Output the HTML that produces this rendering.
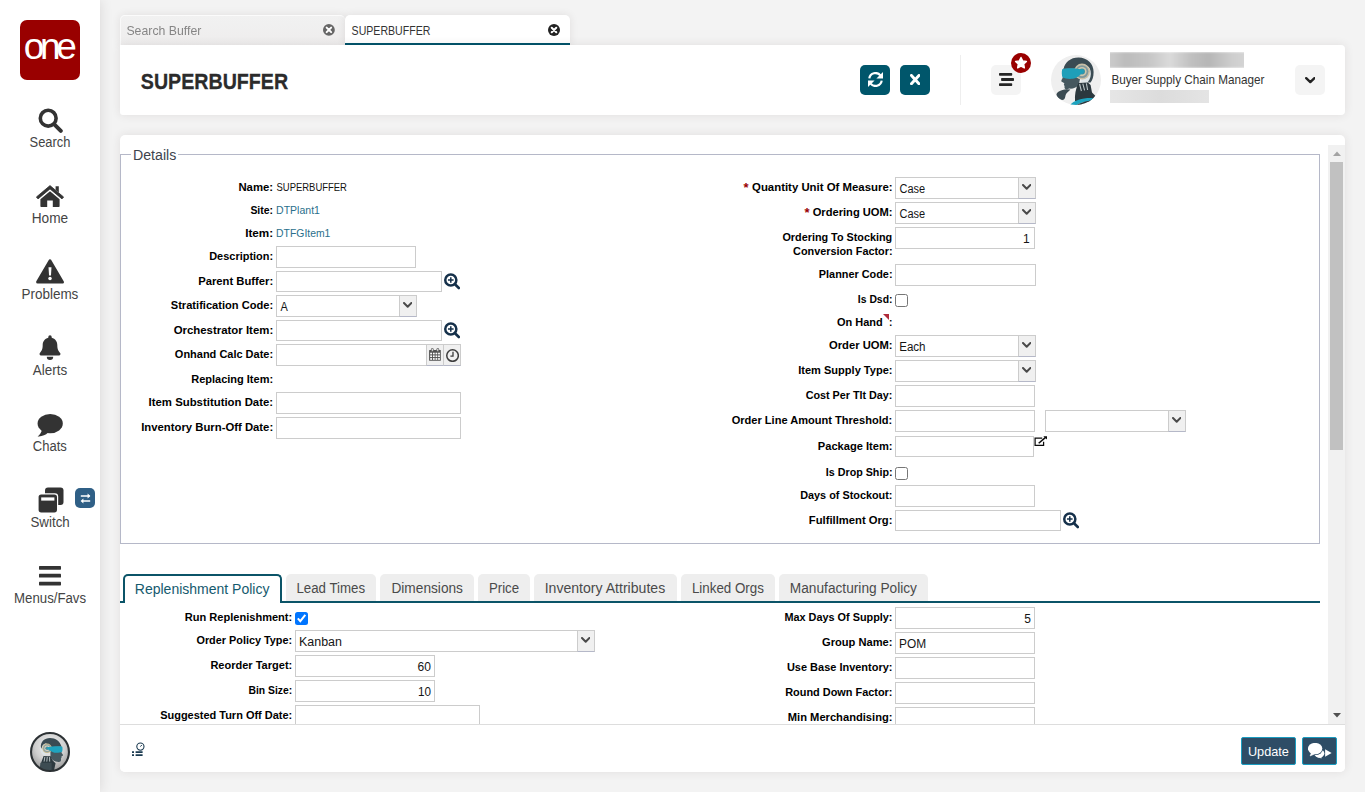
<!DOCTYPE html><html lang="en"><head><meta charset="utf-8"><title>SUPERBUFFER</title><style>
*{box-sizing:border-box;margin:0;padding:0}
html,body{width:1365px;height:792px;overflow:hidden}
body{background:#f3f3f3;font-family:'Liberation Sans',sans-serif;font-size:12px;color:#222;position:relative}
div,span,svg,i,b,nav,header,main,section,label,a,button,footer,aside,h1,fieldset,legend,ul,li{position:absolute}
.card{background:#fff;border-radius:5px;box-shadow:0 0 10px rgba(60,40,40,.10)}
.in{background:#fff;border:1px solid #ccc}
.tr{background:#f0f0f0;border:1px solid #ccc;border-bottom-color:#b5b8c8}
.cb{background:#fff;border:1px solid #767676;border-radius:2.5px}
.tab{background:#eee;border-radius:5px 5px 0 0}
.sq{border-radius:5px}
</style></head><body>
<aside style="left:0;top:0;width:100px;height:792px;background:#fff;box-shadow:0 0 12px rgba(60,40,40,.14)">
<div style="left:20px;top:20px;width:60px;height:60px;background:#990000;border-radius:7px"></div>
<span style="left:23px;top:26px;font-size:37px;line-height:41px;height:41px;white-space:pre;color:#fff;transform:matrix(1.0000,0,0,1,0.65,0.30);transform-origin:0 0;letter-spacing:-4.3px;">one</span>
<svg style="position:absolute;left:38px;top:107.5px;" width="25" height="25" viewBox="0 0 25 25"><circle cx="10.2" cy="10.2" r="7.9" fill="none" stroke="#333" stroke-width="3.6"/><path d="M16.3 16.3 L22.8 22.8" stroke="#333" stroke-width="4" stroke-linecap="round"/></svg>
<span style="left:29px;top:135px;font-size:13.8px;line-height:15px;height:15px;white-space:pre;color:#444;transform:matrix(0.9349,0,0,1,0.57,0.30);transform-origin:0 0;">Search</span>
<svg style="position:absolute;left:36px;top:184.7px;" width="28" height="22" viewBox="0 0 28 22"><path d="M14 0.6 L27.6 12 L26 13.9 L14 3.9 L2 13.9 L0.4 12 Z" fill="#333" stroke="#333" stroke-width="0.8" stroke-linejoin="round"/><path d="M19.6 1.2 h3.2 v6.4 l-3.2 -2.7 Z" fill="#333"/><path d="M14 6.2 L23.6 14.2 V21.2 Q23.6 22 22.8 22 H16.8 V15.6 H11.2 V22 H5.2 Q4.4 22 4.4 21.2 V14.2 Z" fill="#333"/></svg>
<span style="left:31px;top:211px;font-size:13.8px;line-height:15px;height:15px;white-space:pre;color:#444;transform:matrix(0.9907,0,0,1,0.74,0.30);transform-origin:0 0;">Home</span>
<svg style="position:absolute;left:36px;top:258.5px;" width="28" height="25" viewBox="0 0 28 25"><path d="M14 2 L26.3 23 H1.7 Z" fill="#333" stroke="#333" stroke-width="3.2" stroke-linejoin="round"/><path d="M12.5 8.2 h3 l-0.5 8.3 h-2 Z" fill="#fff"/><circle cx="14" cy="19.6" r="1.75" fill="#fff"/></svg>
<span style="left:21px;top:287px;font-size:13.8px;line-height:15px;height:15px;white-space:pre;color:#444;transform:matrix(0.9766,0,0,1,0.45,0.30);transform-origin:0 0;">Problems</span>
<svg style="position:absolute;left:39px;top:335px;" width="22" height="25" viewBox="0 0 22 25"><path d="M11 0.3 a1.7 1.7 0 0 1 1.7 1.7 v0.7 c3.6 0.8 5.6 3.8 5.6 7.4 c0 4.6 1.2 6.2 2.8 7.9 c0.9 1 0.2 2.4 -1.1 2.4 H2 c-1.3 0 -2 -1.4 -1.1 -2.4 c1.6 -1.7 2.8 -3.3 2.8 -7.9 c0 -3.6 2 -6.6 5.6 -7.4 v-0.7 A1.7 1.7 0 0 1 11 0.3 Z" fill="#333"/><path d="M7.8 21.8 h6.4 a3.2 3.2 0 0 1 -6.4 0 Z" fill="#333"/></svg>
<span style="left:32px;top:363px;font-size:13.8px;line-height:15px;height:15px;white-space:pre;color:#444;transform:matrix(0.9733,0,0,1,0.83,0.30);transform-origin:0 0;">Alerts</span>
<svg style="position:absolute;left:37px;top:413.5px;" width="26" height="23" viewBox="0 0 26 23"><ellipse cx="13.2" cy="9.6" rx="12.6" ry="9.6" fill="#333"/><path d="M5 15 C4.6 18.5 2.6 21 0.6 22.4 C4.5 22.8 8.6 21.4 11 18.6 Z" fill="#333"/></svg>
<span style="left:32px;top:439px;font-size:13.8px;line-height:15px;height:15px;white-space:pre;color:#444;transform:matrix(0.9434,0,0,1,0.84,0.30);transform-origin:0 0;">Chats</span>
<svg style="position:absolute;left:38px;top:487.3px;" width="26" height="26" viewBox="0 0 26 26"><rect x="7" y="0.5" width="18.5" height="17.5" rx="3" fill="#333"/><rect x="-0.6" y="6.2" width="20.8" height="20" rx="3.4" fill="#fff"/><rect x="0.6" y="7.4" width="18.4" height="18" rx="2.6" fill="#333"/><rect x="3.2" y="10.4" width="13.2" height="3.2" fill="#fff"/></svg>
<span style="left:30px;top:515px;font-size:13.8px;line-height:15px;height:15px;white-space:pre;color:#444;transform:matrix(0.9661,0,0,1,0.45,0.30);transform-origin:0 0;">Switch</span>
<svg style="position:absolute;left:39px;top:566.3px;" width="22" height="19.4" viewBox="0 0 22 19.4"><rect x="0" y="0" width="22" height="3.7" rx="0.6" fill="#333"/><rect x="0" y="7.85" width="22" height="3.7" rx="0.6" fill="#333"/><rect x="0" y="15.7" width="22" height="3.7" rx="0.6" fill="#333"/></svg>
<span style="left:14px;top:591px;font-size:13.8px;line-height:15px;height:15px;white-space:pre;color:#444;transform:matrix(0.9578,0,0,1,0.07,0.30);transform-origin:0 0;">Menus/Favs</span>
<div class="sq" style="left:75px;top:488px;width:20px;height:20px;background:#2f5f86"></div>
<svg style="position:absolute;left:79.5px;top:492.5px;" width="11" height="11" viewBox="0 0 11 11"><path d="M0.8 3 H9.6 M2 8 H10.2" stroke="#fff" stroke-width="1.3"/><path d="M7.6 0.6 L10.4 3 L7.6 5.4 Z M3.4 5.6 L0.6 8 L3.4 10.4 Z" fill="#fff"/></svg>
<svg style="position:absolute;left:30px;top:732px;" width="40" height="40" viewBox="0 0 50 50"><defs><clipPath id="cps"><circle cx="25" cy="25" r="23.6"/></clipPath><radialGradient id="rgs" cx="0.5" cy="0.35" r="0.7"><stop offset="0" stop-color="#f4f4f4"/><stop offset="0.55" stop-color="#cfcfcf"/><stop offset="1" stop-color="#8e8e8e"/></radialGradient></defs><circle cx="25" cy="25" r="24" fill="url(#rgs)"/><g clip-path="url(#cps)"><path d="M17 14 C13 16 12 21 13.6 25 C14.6 27.4 16.6 29 18.6 29.6 L22 24 Z" fill="#dde4e6"/><path d="M13.6 19 C13 12 18 7.4 25 7.4 C32 7.4 37.6 11.6 39.4 18 L26 19 L20 14 C16.6 14.6 14.6 17 14.6 21 Z" fill="#3a4b53"/><path d="M25.4 19 L39.4 18 C39.8 20 39.6 24 39.4 26 L41.4 28.6 C41.4 29.6 40.4 29.8 39.6 30 L39.4 32 L38.6 33.4 L38.8 35 C38.6 37 37.4 37.6 35.6 37.4 L32 37 C29 36 26.6 33.6 25.6 30.6 Z" fill="#46585f"/><circle cx="21.4" cy="20.4" r="6" fill="#c8b98c"/><circle cx="21.4" cy="20.4" r="4.8" fill="#8aa0a6"/><circle cx="21.4" cy="20.4" r="3.4" fill="#d8d2bc"/><circle cx="21.4" cy="20.4" r="2.2" fill="#4a8e9c"/><path d="M40.4 18.4 C36 17.4 28 17.6 21.6 19.2 C21.2 20.4 21.6 21.4 22.8 22 C25.4 23.4 27 25.4 30.4 25.8 C34 26.2 37.6 25.8 40 25 C40.8 23 40.8 20.4 40.4 18.4 Z" fill="#1fa3be"/><path d="M17 30 L26 30.4 C27 34 29 37 32 39 L30 48 L13 48 L14 38 Z" fill="#2d3a40"/><path d="M18.6 31 L17.6 37 M21.6 31 L21 37 M24.4 31.4 L24.6 37" stroke="#c3cdcf" stroke-width="1.1" fill="none"/><path d="M13 38.4 H27 V48 H12 Z" fill="#3d4c52"/></g><circle cx="25" cy="25" r="23.7" fill="none" stroke="#2c3134" stroke-width="2.6"/></svg>
</aside>
<nav style="left:120px;top:15px;width:450px;height:30px">
<div style="left:0;top:0;width:224.5px;height:30px;background:linear-gradient(#f1f1f1,#eeeded);border-top:1px solid #fbfbfb;border-left:1px solid #f9f9f9;border-radius:5px 5px 0 0;box-shadow:0 0 8px rgba(60,40,40,.10)"></div>
<span style="left:6px;top:9px;font-size:12.4px;line-height:14px;height:14px;white-space:pre;color:#444;transform:matrix(0.9913,0,0,1,0.43,0.20);transform-origin:0 0;opacity:.62;">Search Buffer</span>
<svg style="position:absolute;left:203.3px;top:9.3px;" width="11.8" height="11.8" viewBox="0 0 11.8 11.8"><circle cx="5.9" cy="5.9" r="5.9" fill="#666"/><path d="M3.658 3.658 L8.142 8.142 M8.142 3.658 L3.658 8.142" stroke="#fff" stroke-width="2.006" stroke-linecap="round"/></svg>
<div style="left:225px;top:0;width:225px;height:30px;background:#fff;border-radius:5px 5px 0 0;border-bottom:2px solid #00546b;box-shadow:0 0 8px rgba(60,40,40,.10)"></div>
<span style="left:231px;top:9px;font-size:12.4px;line-height:14px;height:14px;white-space:pre;color:#333;transform:matrix(0.8538,0,0,1,0.62,0.20);transform-origin:0 0;">SUPERBUFFER</span>
<svg style="position:absolute;left:428px;top:9px;" width="12" height="12" viewBox="0 0 12 12"><circle cx="6.0" cy="6.0" r="6.0" fill="#222"/><path d="M3.72 3.72 L8.28 8.28 M8.28 3.72 L3.72 8.28" stroke="#fff" stroke-width="2.04" stroke-linecap="round"/></svg>
</nav>
<header class="card" style="left:120px;top:45px;width:1225px;height:70px;border-radius:0 4px 4px 3px">
<h1 style="left:0;top:0;font-weight:normal;font-size:inherit"><span style="left:20px;top:22px;font-size:22.8px;line-height:26px;height:26px;white-space:pre;color:#2b2b2b;font-weight:bold;transform:matrix(0.8612,0,0,1,0.81,0.55);transform-origin:0 0;-webkit-text-stroke:0.3px #2b2b2b;">SUPERBUFFER</span></h1>
<div class="sq" style="left:740px;top:20px;width:30px;height:30px;background:#00566b"></div>
<svg style="position:absolute;left:748px;top:27px;" width="15" height="15" viewBox="0 0 15 15"><path d="M1.3 6.4 A6.3 6.3 0 0 1 12.4 3.4" fill="none" stroke="#fff" stroke-width="2.2"/><path d="M13.7 8.6 A6.3 6.3 0 0 1 2.6 11.6" fill="none" stroke="#fff" stroke-width="2.2"/><path d="M15 0 V6.5 H8.4 Z" fill="#fff"/><path d="M0 15 V8.5 H6.6 Z" fill="#fff"/></svg>
<div class="sq" style="left:780px;top:20px;width:30px;height:30px;background:#00566b"></div>
<svg style="position:absolute;left:789.7px;top:28.9px;" width="10.4" height="11.2" viewBox="0 0 10.4 11.2"><path d="M1.45 1.45 L8.95 9.75 M8.95 1.45 L1.45 9.75" stroke="#fff" stroke-width="2.9" stroke-linecap="round"/></svg>
<div style="left:840px;top:10px;width:1px;height:50px;background:#eee"></div>
<div class="sq" style="left:871px;top:20px;width:30px;height:30px;background:#f4f4f4"></div>
<svg style="position:absolute;left:879px;top:28px;" width="15" height="13" viewBox="0 0 15 13"><rect x="0" y="0" width="13.2" height="2.8" rx="0.7" fill="#262626"/><rect x="2.1" y="5.1" width="12.9" height="2.8" rx="0.7" fill="#262626"/><rect x="0" y="10.2" width="13.2" height="2.8" rx="0.7" fill="#262626"/></svg>
<svg style="position:absolute;left:891px;top:8px;" width="20" height="20" viewBox="0 0 20 20"><circle cx="10" cy="10" r="10" fill="#990000"/><polygon points="10.00,4.50 11.68,7.89 15.42,8.44 12.71,11.08 13.35,14.81 10.00,13.05 6.65,14.81 7.29,11.08 4.58,8.44 8.32,7.89" fill="#fff" stroke="#fff" stroke-width="1.4" stroke-linejoin="round"/></svg>
<svg style="position:absolute;left:931px;top:10px;" width="50" height="50" viewBox="0 0 50 50"><defs><clipPath id="cph"><circle cx="25" cy="25" r="25"/></clipPath></defs><circle cx="25" cy="25" r="25" fill="#efefef"/><g clip-path="url(#cph)"><path d="M33 12 C39 12 41.6 17 41 23 C40.6 26.5 38.6 28.6 36.4 29.6 L30 27 Z" fill="#dfe6e8"/><path d="M12.6 14 C13.6 7.5 19.5 2.6 27.5 2.6 C36.5 2.6 42.6 9 42.6 17 C42.6 22 41.4 25 39.6 27.4 L36.6 27.6 C39.4 24 40.4 20 39.6 16 C38.6 11.5 35 9.4 31 9.6 L26 13 Z" fill="#3a4b53"/><path d="M12.4 13.6 L26 13 L29 24 L27.6 30.6 C25 33 21.4 34 18.4 33.6 L15.4 34.4 C13.6 34.2 13.2 32.6 13.6 31.2 L12.8 29.6 L13.4 28.2 L10.4 26.4 C10 25.4 11.4 23.6 11.8 22.4 Z" fill="#46585f"/><circle cx="31" cy="16.6" r="8" fill="#c8bfa6"/><circle cx="31" cy="16.6" r="6.4" fill="#7f979c"/><circle cx="31" cy="16.6" r="4.6" fill="#cfc6ac"/><circle cx="31" cy="16.6" r="3" fill="#3a93a6"/><path d="M11.2 14.2 C16 12.6 25 12.8 32.6 15 C33 16.4 32.4 18 31 18.6 C28 20.6 26 23.2 22 23.8 C18 24.2 14 23.8 11.6 22.6 C10.6 20 10.6 16.6 11.2 14.2 Z" fill="#1f9fb9"/><path d="M27.4 28 L36.8 27.4 L39.6 30 L41 37.6 L45 41.6 L40 47 L24 46 C23.6 40 24.6 34 27.4 28 Z" fill="#2b383e"/><path d="M28.6 29 L30.4 36 M31.8 28.6 L33.6 35.4 M35.4 28.4 L36.6 35" stroke="#b9c4c6" stroke-width="1.1" fill="none"/><path d="M15.6 34.2 C13 34.4 10 35 7.4 36.8 C4.8 38.6 5 41.4 7 43 C9 44.8 11.6 45.4 13 44.4 C14.6 43.2 14 40.6 15.4 38.6 C16.4 37.2 18.4 36 19.4 34.6 Z" fill="#3a4a51"/><path d="M19 50 C24 44.6 32 42.6 42 43 L44 45.4 C36 45.4 29 47.4 25 50.6 Z" fill="#1da3bf"/><path d="M25 50.6 C29 47.4 36 45.4 44 45.4 L40 50.6 Z" fill="#27343a"/></g></svg>
<div style="left:990px;top:7px;width:134px;height:16px;overflow:hidden"><div style="left:-4px;top:0;width:142px;height:16px;background:linear-gradient(90deg,#cfcfcf,#bcbcbc 14%,#c6c6c6 30%,#dadada 45%,#c0c0c0 60%,#b6b6b6 72%,#cdcdcd 88%,#d6d6d6);filter:blur(1.2px)"></div></div>
<span style="left:991px;top:27px;font-size:12.8px;line-height:15px;height:15px;white-space:pre;color:#333;transform:matrix(0.9151,0,0,1,0.43,0.00);transform-origin:0 0;">Buyer Supply Chain Manager</span>
<div style="left:990px;top:45px;width:99px;height:13px;background:linear-gradient(90deg,#e6e6e6,#dcdcdc 50%,#e4e4e4);filter:blur(.6px)"></div>
<div class="sq" style="left:1175px;top:20px;width:30px;height:30px;background:#f4f4f4"></div>
<svg style="position:absolute;left:1184.6px;top:32px;" width="10.6" height="6.6" viewBox="0 0 10.6 6.6"><path d="M1.2 1.2 L5.3 5.1 L9.4 1.2" fill="none" stroke="#222" stroke-width="2.4" stroke-linecap="round" stroke-linejoin="round"/></svg>
</header>
<main class="card" style="left:120px;top:135px;width:1225px;height:637px;overflow:hidden">
<section style="left:0;top:10px;width:1208px;height:579px;overflow:hidden">
<fieldset style="left:0;top:9px;width:1200px;height:390px;border:1px solid #b5b8c8"></fieldset>
<div style="left:11px;top:5px;width:47px;height:9px;background:#fff"></div>
<legend><span style="left:13px;top:2px;font-size:14px;line-height:16px;height:16px;white-space:pre;color:#3d434d;transform:matrix(1.0116,0,0,1,0.01,0.00);transform-origin:0 0;">Details</span></legend>
<label><span style="left:118px;top:36px;font-size:11px;line-height:12px;height:12px;white-space:pre;color:#000;font-weight:bold;transform:matrix(1.0322,0,0,1,0.38,0.00);transform-origin:0 0;">Name:</span></label>
<span style="left:156px;top:36px;font-size:11px;line-height:12px;height:12px;white-space:pre;color:#111;transform:matrix(0.8594,0,0,1,0.52,0.00);transform-origin:0 0;">SUPERBUFFER</span>
<label><span style="left:130px;top:59px;font-size:11px;line-height:12px;height:12px;white-space:pre;color:#000;font-weight:bold;transform:matrix(0.9520,0,0,1,0.39,0.00);transform-origin:0 0;">Site:</span></label>
<span style="left:156px;top:59px;font-size:11px;line-height:12px;height:12px;white-space:pre;color:#2a6f8c;transform:matrix(0.9551,0,0,1,0.11,0.00);transform-origin:0 0;">DTPlant1</span>
<label><span style="left:125px;top:82px;font-size:11px;line-height:12px;height:12px;white-space:pre;color:#000;font-weight:bold;transform:matrix(1.0653,0,0,1,0.15,0.00);transform-origin:0 0;">Item:</span></label>
<span style="left:156px;top:82px;font-size:11px;line-height:12px;height:12px;white-space:pre;color:#2a6f8c;transform:matrix(0.9446,0,0,1,0.12,0.00);transform-origin:0 0;">DTFGItem1</span>
<label><span style="left:89px;top:105px;font-size:11px;line-height:12px;height:12px;white-space:pre;color:#000;font-weight:bold;transform:matrix(0.9956,0,0,1,0.20,0.00);transform-origin:0 0;">Description:</span></label>
<div class="in" style="left:156px;top:101px;width:140px;height:22px"></div>
<label><span style="left:78px;top:130px;font-size:11px;line-height:12px;height:12px;white-space:pre;color:#000;font-weight:bold;transform:matrix(1.0224,0,0,1,0.18,0.00);transform-origin:0 0;">Parent Buffer:</span></label>
<div class="in" style="left:156px;top:126px;width:166px;height:21px"></div>
<svg style="position:absolute;left:324px;top:128px;" width="16" height="17" viewBox="0 0 16 17"><circle cx="6.8" cy="7" r="5.55" fill="none" stroke="#15304a" stroke-width="2.5"/><path d="M11 11.3 L14.8 15" stroke="#15304a" stroke-width="2.6" stroke-linecap="round"/><path d="M4 7 H9.6 M6.8 4.2 V9.8" stroke="#15304a" stroke-width="1.5"/></svg>
<label><span style="left:50px;top:154px;font-size:11px;line-height:12px;height:12px;white-space:pre;color:#000;font-weight:bold;transform:matrix(1.0090,0,0,1,0.77,0.00);transform-origin:0 0;">Stratification Code:</span></label>
<div class="in" style="left:156px;top:150px;width:141px;height:22px"></div><span style="left:160px;top:154px;font-size:12px;line-height:14px;height:14px;white-space:pre;color:#151515;transform:matrix(0.9125,0,0,1,0.55,0.80);transform-origin:0 0;">A</span><div class="tr" style="left:279px;top:150px;width:18px;height:22px"></div><svg style="position:absolute;left:282.8px;top:157.4px;" width="9.4" height="6" viewBox="0 0 9.4 6"><path d="M1 1 L4.7 4.7 L8.4 1" fill="none" stroke="#4a4a4a" stroke-width="2" stroke-linecap="round" stroke-linejoin="round"/></svg>
<label><span style="left:53px;top:179px;font-size:11px;line-height:12px;height:12px;white-space:pre;color:#000;font-weight:bold;transform:matrix(1.0374,0,0,1,0.63,0.00);transform-origin:0 0;">Orchestrator Item:</span></label>
<div class="in" style="left:156px;top:175px;width:166px;height:21px"></div>
<svg style="position:absolute;left:324px;top:177px;" width="16" height="17" viewBox="0 0 16 17"><circle cx="6.8" cy="7" r="5.55" fill="none" stroke="#15304a" stroke-width="2.5"/><path d="M11 11.3 L14.8 15" stroke="#15304a" stroke-width="2.6" stroke-linecap="round"/><path d="M4 7 H9.6 M6.8 4.2 V9.8" stroke="#15304a" stroke-width="1.5"/></svg>
<label><span style="left:54px;top:203px;font-size:11px;line-height:12px;height:12px;white-space:pre;color:#000;font-weight:bold;transform:matrix(0.9982,0,0,1,0.85,0.00);transform-origin:0 0;">Onhand Calc Date:</span></label>
<div class="in" style="left:156px;top:199px;width:151px;height:22px"></div>
<div class="tr" style="left:306px;top:199px;width:18px;height:22px"></div>
<svg style="position:absolute;left:309px;top:203px;" width="12" height="13" viewBox="0 0 12 13"><rect x="0.1" y="2.1" width="11.7" height="10.7" rx="0.5" fill="#505050"/><rect x="1.2" y="4.7" width="1.8" height="1.7" fill="#fff"/><rect x="3.9" y="4.7" width="1.8" height="1.7" fill="#fff"/><rect x="6.5" y="4.7" width="1.8" height="1.7" fill="#fff"/><rect x="9.1" y="4.7" width="1.8" height="1.7" fill="#fff"/><rect x="1.2" y="7.4" width="1.8" height="1.7" fill="#fff"/><rect x="3.9" y="7.4" width="1.8" height="1.7" fill="#fff"/><rect x="6.5" y="7.4" width="1.8" height="1.7" fill="#fff"/><rect x="9.1" y="7.4" width="1.8" height="1.7" fill="#fff"/><rect x="1.2" y="10.1" width="1.8" height="1.7" fill="#fff"/><rect x="3.9" y="10.1" width="1.8" height="1.7" fill="#fff"/><rect x="6.5" y="10.1" width="1.8" height="1.7" fill="#fff"/><rect x="9.1" y="10.1" width="1.8" height="1.7" fill="#fff"/><rect x="2.4" y="0.3" width="1.9" height="3.1" rx="0.95" fill="#f4f4f4" stroke="#505050" stroke-width="0.8"/><rect x="7.8" y="0.3" width="1.9" height="3.1" rx="0.95" fill="#f4f4f4" stroke="#505050" stroke-width="0.8"/></svg>
<div class="tr" style="left:323px;top:199px;width:18px;height:22px"></div>
<svg style="position:absolute;left:325.9px;top:203.95px;" width="13.1" height="13.1" viewBox="0 0 13.1 13.1"><circle cx="6.55" cy="6.55" r="5.8" fill="none" stroke="#3c3c3c" stroke-width="1.5"/><path d="M7 2.7 V7.15 H4.4" fill="none" stroke="#3c3c3c" stroke-width="1.3"/></svg>
<label><span style="left:71px;top:228px;font-size:11px;line-height:12px;height:12px;white-space:pre;color:#000;font-weight:bold;transform:matrix(0.9997,0,0,1,0.20,0.00);transform-origin:0 0;">Replacing Item:</span></label>
<label><span style="left:28px;top:251px;font-size:11px;line-height:12px;height:12px;white-space:pre;color:#000;font-weight:bold;transform:matrix(1.0344,0,0,1,0.57,0.00);transform-origin:0 0;">Item Substitution Date:</span></label>
<div class="in" style="left:156px;top:247px;width:185px;height:22px"></div>
<label><span style="left:21px;top:276px;font-size:11px;line-height:12px;height:12px;white-space:pre;color:#000;font-weight:bold;transform:matrix(1.0285,0,0,1,0.18,0.00);transform-origin:0 0;">Inventory Burn-Off Date:</span></label>
<div class="in" style="left:156px;top:272px;width:185px;height:22px"></div>
<label><span style="left:632px;top:36px;font-size:11px;line-height:12px;height:12px;white-space:pre;color:#000;font-weight:bold;transform:matrix(1.0356,0,0,1,0.03,0.00);transform-origin:0 0;">Quantity Unit Of Measure:</span><span style="left:623px;top:35px;font-size:13px;line-height:15px;height:15px;white-space:pre;color:#990000;font-weight:bold;transform:matrix(1.0000,0,0,1,0.55,0.20);transform-origin:0 0;">*</span></label>
<div class="in" style="left:775px;top:32px;width:141px;height:22px"></div><span style="left:779px;top:36px;font-size:12px;line-height:14px;height:14px;white-space:pre;color:#151515;transform:matrix(0.9153,0,0,1,0.58,0.80);transform-origin:0 0;">Case</span><div class="tr" style="left:898px;top:32px;width:18px;height:22px"></div><svg style="position:absolute;left:901.8px;top:39.4px;" width="9.4" height="6" viewBox="0 0 9.4 6"><path d="M1 1 L4.7 4.7 L8.4 1" fill="none" stroke="#4a4a4a" stroke-width="2" stroke-linecap="round" stroke-linejoin="round"/></svg>
<label><span style="left:692px;top:61px;font-size:11px;line-height:12px;height:12px;white-space:pre;color:#000;font-weight:bold;transform:matrix(1.0136,0,0,1,0.64,0.00);transform-origin:0 0;">Ordering UOM:</span><span style="left:684px;top:60px;font-size:13px;line-height:15px;height:15px;white-space:pre;color:#990000;font-weight:bold;transform:matrix(1.0000,0,0,1,0.55,0.20);transform-origin:0 0;">*</span></label>
<div class="in" style="left:775px;top:57px;width:141px;height:22px"></div><span style="left:779px;top:61px;font-size:12px;line-height:14px;height:14px;white-space:pre;color:#151515;transform:matrix(0.9153,0,0,1,0.58,0.80);transform-origin:0 0;">Case</span><div class="tr" style="left:898px;top:57px;width:18px;height:22px"></div><svg style="position:absolute;left:901.8px;top:64.4px;" width="9.4" height="6" viewBox="0 0 9.4 6"><path d="M1 1 L4.7 4.7 L8.4 1" fill="none" stroke="#4a4a4a" stroke-width="2" stroke-linecap="round" stroke-linejoin="round"/></svg>
<label><span style="left:662px;top:86px;font-size:11px;line-height:12px;height:12px;white-space:pre;color:#000;font-weight:bold;transform:matrix(0.9830,0,0,1,0.46,0.00);transform-origin:0 0;">Ordering To Stocking</span></label>
<label><span style="left:673px;top:100px;font-size:11px;line-height:12px;height:12px;white-space:pre;color:#000;font-weight:bold;transform:matrix(0.9864,0,0,1,0.06,0.00);transform-origin:0 0;">Conversion Factor:</span></label>
<div class="in" style="left:775px;top:82px;width:140px;height:22px"></div><span style="left:903px;top:86px;font-size:12px;line-height:14px;height:14px;white-space:pre;color:#151515;transform:matrix(1.0000,0,0,1,0.03,0.80);transform-origin:0 0;">1</span>
<label><span style="left:698px;top:123px;font-size:11px;line-height:12px;height:12px;white-space:pre;color:#000;font-weight:bold;transform:matrix(0.9883,0,0,1,0.81,0.00);transform-origin:0 0;">Planner Code:</span></label>
<div class="in" style="left:775px;top:119px;width:141px;height:22px"></div>
<label><span style="left:737px;top:148px;font-size:11px;line-height:12px;height:12px;white-space:pre;color:#000;font-weight:bold;transform:matrix(0.9434,0,0,1,0.84,0.00);transform-origin:0 0;">Is Dsd:</span></label>
<div class="cb" style="left:775px;top:149px;width:13px;height:13px"></div>
<label><span style="left:717px;top:171px;font-size:11px;line-height:12px;height:12px;white-space:pre;color:#000;font-weight:bold;transform:matrix(0.9972,0,0,1,0.05,0.00);transform-origin:0 0;">On Hand</span></label>
<label><span style="left:769px;top:171px;font-size:11px;line-height:12px;height:12px;white-space:pre;color:#000;font-weight:bold;transform:matrix(0.9231,0,0,1,0.03,0.00);transform-origin:0 0;">:</span></label>
<svg style="position:absolute;left:763px;top:169.4px;" width="6" height="6" viewBox="0 0 6 6"><path d="M0 0 H6 V6 Z" fill="#b02a3a"/></svg>
<label><span style="left:709px;top:194px;font-size:11px;line-height:12px;height:12px;white-space:pre;color:#000;font-weight:bold;transform:matrix(1.0189,0,0,1,0.04,0.00);transform-origin:0 0;">Order UOM:</span></label>
<div class="in" style="left:775px;top:190px;width:141px;height:22px"></div><span style="left:779px;top:194px;font-size:12px;line-height:14px;height:14px;white-space:pre;color:#151515;transform:matrix(0.9639,0,0,1,0.19,0.80);transform-origin:0 0;">Each</span><div class="tr" style="left:898px;top:190px;width:18px;height:22px"></div><svg style="position:absolute;left:901.8px;top:197.4px;" width="9.4" height="6" viewBox="0 0 9.4 6"><path d="M1 1 L4.7 4.7 L8.4 1" fill="none" stroke="#4a4a4a" stroke-width="2" stroke-linecap="round" stroke-linejoin="round"/></svg>
<label><span style="left:678px;top:219px;font-size:11px;line-height:12px;height:12px;white-space:pre;color:#000;font-weight:bold;transform:matrix(1.0041,0,0,1,0.20,0.00);transform-origin:0 0;">Item Supply Type:</span></label>
<div class="in" style="left:775px;top:215px;width:141px;height:22px"></div><div class="tr" style="left:898px;top:215px;width:18px;height:22px"></div><svg style="position:absolute;left:901.8px;top:222.4px;" width="9.4" height="6" viewBox="0 0 9.4 6"><path d="M1 1 L4.7 4.7 L8.4 1" fill="none" stroke="#4a4a4a" stroke-width="2" stroke-linecap="round" stroke-linejoin="round"/></svg>
<label><span style="left:685px;top:244px;font-size:11px;line-height:12px;height:12px;white-space:pre;color:#000;font-weight:bold;transform:matrix(0.9791,0,0,1,0.66,0.00);transform-origin:0 0;">Cost Per Tlt Day:</span></label>
<div class="in" style="left:775px;top:240px;width:140px;height:22px"></div>
<label><span style="left:611px;top:269px;font-size:11px;line-height:12px;height:12px;white-space:pre;color:#000;font-weight:bold;transform:matrix(1.0050,0,0,1,0.65,0.00);transform-origin:0 0;">Order Line Amount Threshold:</span></label>
<div class="in" style="left:775px;top:265px;width:140px;height:22px"></div>
<div class="in" style="left:925px;top:265px;width:141px;height:22px"></div><div class="tr" style="left:1048px;top:265px;width:18px;height:22px"></div><svg style="position:absolute;left:1051.8px;top:272.4px;" width="9.4" height="6" viewBox="0 0 9.4 6"><path d="M1 1 L4.7 4.7 L8.4 1" fill="none" stroke="#4a4a4a" stroke-width="2" stroke-linecap="round" stroke-linejoin="round"/></svg>
<label><span style="left:697px;top:295px;font-size:11px;line-height:12px;height:12px;white-space:pre;color:#000;font-weight:bold;transform:matrix(1.0107,0,0,1,0.79,0.00);transform-origin:0 0;">Package Item:</span></label>
<div class="in" style="left:775px;top:291px;width:139px;height:21px"></div>
<svg style="position:absolute;left:913.6px;top:290.6px;" width="13.4" height="11" viewBox="0 0 13.4 11"><path d="M8.2 2.1 H1.1 V9.5 H9.6 V5.7" fill="none" stroke="#0a0a0a" stroke-width="1.25"/><path d="M4.7 7.2 L11.6 1.4" stroke="#0a0a0a" stroke-width="1.5"/><path d="M9.3 0.3 H13.1 V3.6 Z" fill="#0a0a0a"/></svg>
<label><span style="left:705px;top:321px;font-size:11px;line-height:12px;height:12px;white-space:pre;color:#000;font-weight:bold;transform:matrix(0.9741,0,0,1,0.82,0.00);transform-origin:0 0;">Is Drop Ship:</span></label>
<div class="cb" style="left:775px;top:322px;width:13px;height:13px"></div>
<label><span style="left:680px;top:344px;font-size:11px;line-height:12px;height:12px;white-space:pre;color:#000;font-weight:bold;transform:matrix(0.9864,0,0,1,0.21,0.00);transform-origin:0 0;">Days of Stockout:</span></label>
<div class="in" style="left:775px;top:340px;width:140px;height:22px"></div>
<label><span style="left:688px;top:369px;font-size:11px;line-height:12px;height:12px;white-space:pre;color:#000;font-weight:bold;transform:matrix(1.0222,0,0,1,0.78,0.00);transform-origin:0 0;">Fulfillment Org:</span></label>
<div class="in" style="left:775px;top:365px;width:166px;height:21px"></div>
<svg style="position:absolute;left:943px;top:367px;" width="16" height="17" viewBox="0 0 16 17"><circle cx="6.8" cy="7" r="5.55" fill="none" stroke="#15304a" stroke-width="2.5"/><path d="M11 11.3 L14.8 15" stroke="#15304a" stroke-width="2.6" stroke-linecap="round"/><path d="M4 7 H9.6 M6.8 4.2 V9.8" stroke="#15304a" stroke-width="1.5"/></svg>
<div style="left:0;top:456px;width:1200px;height:2px;background:#0b5468"></div>
<div style="left:3px;top:429px;width:159px;height:29px;background:#fff;border:2px solid #0b5468;border-bottom:0;border-radius:5px 5px 0 0"></div>
<span style="left:14px;top:436px;font-size:14px;line-height:16px;height:16px;white-space:pre;color:#155a6e;transform:matrix(1.0000,0,0,1,0.83,0.00);transform-origin:0 0;">Replenishment Policy</span>
<div class="tab" style="left:166px;top:429.4px;width:89.6px;height:26.6px"></div>
<span style="left:176px;top:435px;font-size:14px;line-height:16px;height:16px;white-space:pre;color:#4a4a4a;transform:matrix(0.9479,0,0,1,0.48,0.30);transform-origin:0 0;">Lead Times</span>
<div class="tab" style="left:260px;top:429.4px;width:94px;height:26.6px"></div>
<span style="left:271px;top:435px;font-size:14px;line-height:16px;height:16px;white-space:pre;color:#4a4a4a;transform:matrix(0.9776,0,0,1,0.45,0.30);transform-origin:0 0;">Dimensions</span>
<div class="tab" style="left:358px;top:429.4px;width:52px;height:26.6px"></div>
<span style="left:368px;top:435px;font-size:14px;line-height:16px;height:16px;white-space:pre;color:#4a4a4a;transform:matrix(0.9461,0,0,1,0.89,0.30);transform-origin:0 0;">Price</span>
<div class="tab" style="left:414px;top:429.4px;width:142.6px;height:26.6px"></div>
<span style="left:424px;top:435px;font-size:14px;line-height:16px;height:16px;white-space:pre;color:#4a4a4a;transform:matrix(1.0053,0,0,1,0.69,0.30);transform-origin:0 0;">Inventory Attributes</span>
<div class="tab" style="left:561.4px;top:429.4px;width:93.6px;height:26.6px"></div>
<span style="left:571px;top:435px;font-size:14px;line-height:16px;height:16px;white-space:pre;color:#4a4a4a;transform:matrix(0.9543,0,0,1,0.88,0.30);transform-origin:0 0;">Linked Orgs</span>
<div class="tab" style="left:659px;top:429.4px;width:148.6px;height:26.6px"></div>
<span style="left:669px;top:435px;font-size:14px;line-height:16px;height:16px;white-space:pre;color:#4a4a4a;transform:matrix(0.9779,0,0,1,0.85,0.30);transform-origin:0 0;">Manufacturing Policy</span>
<label><span style="left:64px;top:466px;font-size:11px;line-height:12px;height:12px;white-space:pre;color:#000;font-weight:bold;transform:matrix(1.0045,0,0,1,0.80,0.00);transform-origin:0 0;">Run Replenishment:</span></label>
<div style="left:175px;top:467px;width:13px;height:13px;background:#0075ff;border-radius:2.5px"></div><svg style="position:absolute;left:175px;top:467px;" width="13" height="13" viewBox="0 0 13 13"><path d="M2.8 6.4 L5.3 9.1 L10.3 2.9" fill="none" stroke="#fff" stroke-width="2" stroke-linecap="butt"/></svg>
<label><span style="left:76px;top:489px;font-size:11px;line-height:12px;height:12px;white-space:pre;color:#000;font-weight:bold;transform:matrix(0.9864,0,0,1,0.46,0.00);transform-origin:0 0;">Order Policy Type:</span></label>
<div class="in" style="left:175px;top:485px;width:300px;height:22px"></div><span style="left:179px;top:489px;font-size:12px;line-height:14px;height:14px;white-space:pre;color:#151515;transform:matrix(1.0372,0,0,1,0.01,0.80);transform-origin:0 0;">Kanban</span><div class="tr" style="left:457px;top:485px;width:18px;height:22px"></div><svg style="position:absolute;left:460.8px;top:492.4px;" width="9.4" height="6" viewBox="0 0 9.4 6"><path d="M1 1 L4.7 4.7 L8.4 1" fill="none" stroke="#4a4a4a" stroke-width="2" stroke-linecap="round" stroke-linejoin="round"/></svg>
<label><span style="left:90px;top:514px;font-size:11px;line-height:12px;height:12px;white-space:pre;color:#000;font-weight:bold;transform:matrix(1.0016,0,0,1,0.40,0.00);transform-origin:0 0;">Reorder Target:</span></label>
<div class="in" style="left:175px;top:510px;width:140px;height:22px"></div><span style="left:297px;top:514px;font-size:12px;line-height:14px;height:14px;white-space:pre;color:#151515;transform:matrix(1.0041,0,0,1,0.52,0.80);transform-origin:0 0;">60</span>
<label><span style="left:128px;top:539px;font-size:11px;line-height:12px;height:12px;white-space:pre;color:#000;font-weight:bold;transform:matrix(0.9412,0,0,1,0.44,0.00);transform-origin:0 0;">Bin Size:</span></label>
<div class="in" style="left:175px;top:535px;width:140px;height:22px"></div><span style="left:297px;top:539px;font-size:12px;line-height:14px;height:14px;white-space:pre;color:#151515;transform:matrix(0.9750,0,0,1,0.90,0.80);transform-origin:0 0;">10</span>
<label><span style="left:40px;top:564px;font-size:11px;line-height:12px;height:12px;white-space:pre;color:#000;font-weight:bold;transform:matrix(0.9969,0,0,1,0.18,0.00);transform-origin:0 0;">Suggested Turn Off Date:</span></label>
<div class="in" style="left:175px;top:560px;width:185px;height:22px"></div>
<label><span style="left:664px;top:466px;font-size:11px;line-height:12px;height:12px;white-space:pre;color:#000;font-weight:bold;transform:matrix(0.9877,0,0,1,0.41,0.00);transform-origin:0 0;">Max Days Of Supply:</span></label>
<div class="in" style="left:775px;top:462px;width:140px;height:22px"></div><span style="left:904px;top:466px;font-size:12px;line-height:14px;height:14px;white-space:pre;color:#151515;transform:matrix(1.0000,0,0,1,0.33,0.80);transform-origin:0 0;">5</span>
<label><span style="left:702px;top:491px;font-size:11px;line-height:12px;height:12px;white-space:pre;color:#000;font-weight:bold;transform:matrix(1.0114,0,0,1,0.04,0.00);transform-origin:0 0;">Group Name:</span></label>
<div class="in" style="left:775px;top:487px;width:140px;height:22px"></div><span style="left:779px;top:491px;font-size:12px;line-height:14px;height:14px;white-space:pre;color:#151515;transform:matrix(0.9892,0,0,1,0.06,0.80);transform-origin:0 0;">POM</span>
<label><span style="left:666px;top:516px;font-size:11px;line-height:12px;height:12px;white-space:pre;color:#000;font-weight:bold;transform:matrix(0.9978,0,0,1,0.93,0.00);transform-origin:0 0;">Use Base Inventory:</span></label>
<div class="in" style="left:775px;top:512px;width:140px;height:22px"></div>
<label><span style="left:665px;top:541px;font-size:11px;line-height:12px;height:12px;white-space:pre;color:#000;font-weight:bold;transform:matrix(0.9918,0,0,1,0.21,0.00);transform-origin:0 0;">Round Down Factor:</span></label>
<div class="in" style="left:775px;top:537px;width:140px;height:22px"></div>
<label><span style="left:667px;top:566px;font-size:11px;line-height:12px;height:12px;white-space:pre;color:#000;font-weight:bold;transform:matrix(1.0138,0,0,1,0.79,0.00);transform-origin:0 0;">Min Merchandising:</span></label>
<div class="in" style="left:775px;top:562px;width:140px;height:22px"></div>
</section>
<div style="left:1208px;top:10px;width:17px;height:579px;background:#f1f1f1"></div>
<div style="left:1210px;top:27px;width:13px;height:288px;background:#c1c1c1"></div>
<svg style="position:absolute;left:1212.6px;top:16px;" width="8" height="5" viewBox="0 0 8 5"><path d="M0 5 L4 0.6 L8 5 Z" fill="#a3a3a3"/></svg>
<svg style="position:absolute;left:1212.6px;top:578px;" width="8" height="5" viewBox="0 0 8 5"><path d="M0 0 L4 4.4 L8 0 Z" fill="#505050"/></svg>
<footer style="left:0;top:589px;width:1225px;height:48px;background:#fff;border-top:1px solid #ddd">
<svg style="position:absolute;left:12px;top:17px;" width="13" height="15" viewBox="0 0 13 15"><circle cx="8.4" cy="4.6" r="3.6" fill="none" stroke="#1a3a50" stroke-width="1.1"/><path d="M8.4 4.6 L9.8 3" stroke="#1a3a50" stroke-width="1"/><path d="M0 10.2 h2 M3.6 10.2 h7 M0 13.2 h2 M3.6 13.2 h7" stroke="#1a3a50" stroke-width="1.7"/></svg>
<div style="left:1121px;top:12px;width:55px;height:28px;background:#2e4d66;border:1px solid #1a9cc0;border-radius:2px"></div>
<span style="left:1127px;top:20px;font-size:12.4px;line-height:14px;height:14px;white-space:pre;color:#fff;transform:matrix(1.0260,0,0,1,0.92,0.00);transform-origin:0 0;">Update</span>
<div style="left:1182px;top:12px;width:35px;height:28px;background:#2e4d66;border:1px solid #1a9cc0;border-radius:2px"></div>
<svg style="position:absolute;left:1188px;top:18px;" width="24" height="16" viewBox="0 0 24 16"><ellipse cx="11.3" cy="10.4" rx="5.1" ry="4" fill="#fff"/><path d="M12.4 13.4 L13.6 15 L9.6 14 Z" fill="#fff" stroke="#fff" stroke-width="0.6" stroke-linejoin="round"/><ellipse cx="7.1" cy="5.6" rx="8" ry="6.5" fill="#2e4d66"/><ellipse cx="7.1" cy="5.6" rx="7.2" ry="5.7" fill="#fff"/><path d="M3.4 9.6 L2.1 13 L6.6 11" fill="#fff" stroke="#fff" stroke-width="0.5" stroke-linejoin="round"/><path d="M17.1 6.2 L23.6 10 L17.1 13.8 Z" fill="#fff"/></svg>
</footer>
</main>
</body></html>
